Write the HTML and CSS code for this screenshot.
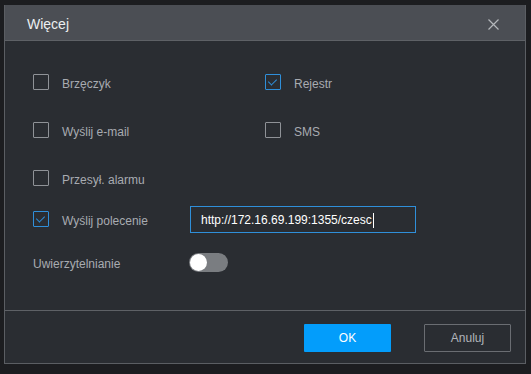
FILE: index.html
```html
<!DOCTYPE html>
<html lang="pl">
<head>
  <meta charset="UTF-8" />
  <title>Więcej</title>
  <link rel="stylesheet" href="styles.css">
</head>
<body>
  <div class="dialog">
    <div class="dialog-head">
      <span class="dialog-title">Więcej</span>
      <svg class="close" width="11" height="11" viewBox="0 0 11 11">
        <path d="M0.5 0.5L10.5 10.5M10.5 0.5L0.5 10.5" stroke="#b4b7bb" stroke-width="1.2" fill="none"/>
      </svg>
    </div>

    <div class="dialog-body">
      <div class="row">
        <label class="opt col-left"><span class="box"></span><span class="txt">Brzęczyk</span></label>
        <label class="opt"><span class="box checked"></span><span class="txt">Rejestr</span></label>
      </div>
      <div class="row">
        <label class="opt col-left"><span class="box"></span><span class="txt">Wyślij e-mail</span></label>
        <label class="opt"><span class="box"></span><span class="txt">SMS</span></label>
      </div>
      <div class="row">
        <label class="opt col-left"><span class="box"></span><span class="txt">Przesył. alarmu</span></label>
      </div>
      <div class="row row-cmd">
        <label class="opt col-cmd"><span class="box checked"></span><span class="txt">Wyślij polecenie</span></label>
        <div class="field">http://172.16.69.199:1355/czesc<span class="caret"></span></div>
      </div>
      <div class="row row-auth">
        <span class="opt col-auth"><span class="txt">Uwierzytelnianie</span></span>
        <span class="toggle"><span class="knob"></span></span>
      </div>
    </div>

    <div class="dialog-foot">
      <button class="btn btn-ok">OK</button>
      <button class="btn btn-cancel">Anuluj</button>
    </div>
  </div>
</body>
</html>
```

FILE: styles.css
```css
body, html {
  margin: 0;
  padding: 0;
  background: #1c1d20;
  font-family: 'Liberation Sans', Arial, sans-serif;
  font-size: 12px;
}
.dialog {
  box-sizing: border-box;
  margin: 5px 0 0 4px;
  width: 522px;
  height: 359px;
  background: #2a2d32;
  border: 1px solid #5b5e63;
  border-top: none;
  display: flex;
  flex-direction: column;
}
.dialog-head {
  height: 35px;
  background: #4b4e54;
  border-bottom: 1px solid #5e6166;
  display: flex;
  align-items: center;
  justify-content: space-between;
  padding: 0 26px 0 22px;
}
.dialog-title {
  color: #eceef0;
  font-size: 14px;
  padding-top: 3px;
}
.close {
  display: block;
  margin-top: 3px;
}
.dialog-body {
  flex: 1;
  padding: 17px 0 0 28px;
}
.row {
  display: flex;
  align-items: center;
  height: 48px;
}
.opt {
  display: flex;
  align-items: center;
  color: #a8abb1;
}
.txt {
  padding-top: 3px;
}
.col-left {
  width: 232px;
}
.box {
  box-sizing: border-box;
  width: 16px;
  height: 16px;
  border: 1px solid #8f9297;
  border-radius: 1px;
  margin-right: 13px;
  position: relative;
}
.box.checked {
  border-color: #2f8fda;
}
.box.checked::after {
  content: '';
  position: absolute;
  left: 4px;
  top: 2px;
  width: 4px;
  height: 7px;
  border: solid #2f8fda;
  border-width: 0 1.5px 1.5px 0;
  transform: rotate(45deg);
}
.row-cmd {
  height: 34px;
}
.col-cmd {
  width: 157px;
}
.field {
  box-sizing: border-box;
  width: 226px;
  height: 27px;
  border: 1px solid #2f8fda;
  color: #ffffff;
  padding: 2px 10px 0;
  display: flex;
  align-items: center;
}
.caret {
  display: inline-block;
  width: 1px;
  height: 15px;
  background: #ffffff;
  margin-left: 1px;
}
.row-auth {
  height: 19px;
  margin-top: 17px;
}
.col-auth {
  width: 156px;
}
.toggle {
  width: 39px;
  height: 19px;
  border-radius: 10px;
  background: #7a7d81;
  display: flex;
  align-items: center;
  padding-left: 1px;
  box-sizing: border-box;
}
.knob {
  width: 17px;
  height: 17px;
  border-radius: 50%;
  background: #ffffff;
}
.dialog-foot {
  height: 51px;
  border-top: 1px solid #5e6166;
  display: flex;
  align-items: center;
  justify-content: flex-end;
  gap: 33px;
  padding: 1px 14px 0 0;
}
.btn {
  box-sizing: border-box;
  width: 87px;
  height: 28px;
  font-family: 'Liberation Sans', Arial, sans-serif;
  font-size: 12px;
  border-radius: 1px;
}
.btn-ok {
  background: #039dfb;
  border: none;
  color: #ffffff;
}
.btn-cancel {
  background: transparent;
  border: 1px solid #6a6d72;
  color: #b2b5ba;
}
```
